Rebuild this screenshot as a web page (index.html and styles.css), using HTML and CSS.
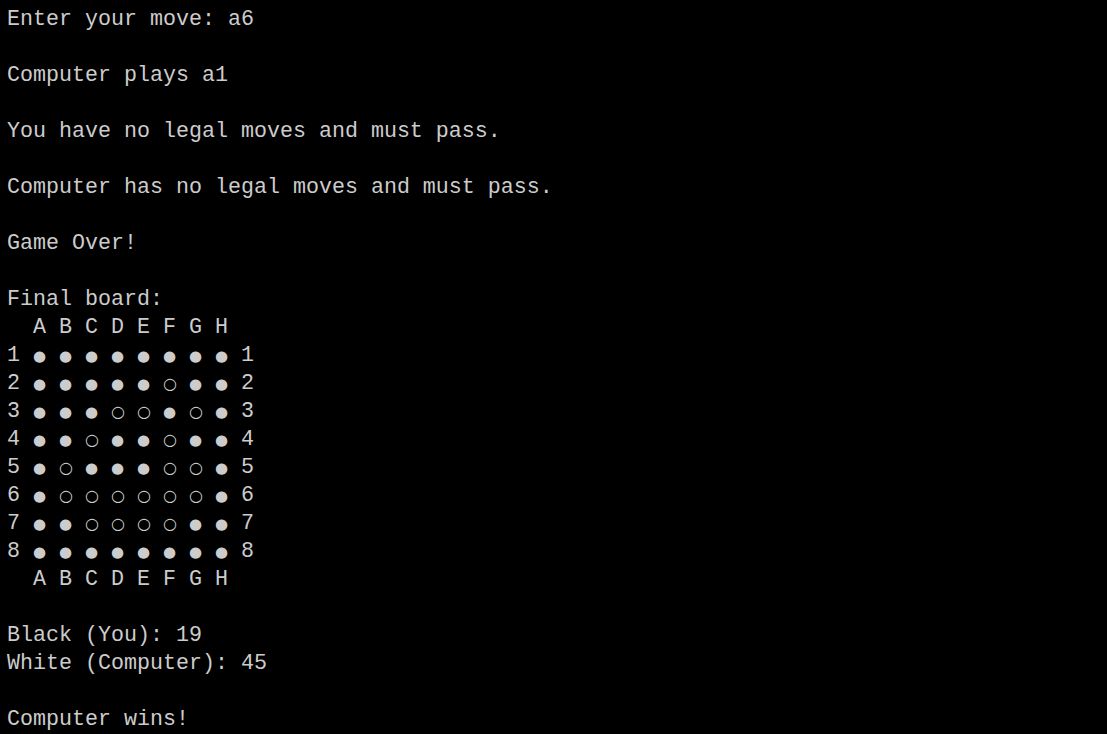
FILE: index.html
```html
<!DOCTYPE html>
<html>
<head>
<meta charset="utf-8">
<link rel="stylesheet" href="styles.css">
</head>
<body>
<div class="term">
<div class="line">Enter your move: a6</div>
<div class="line"></div>
<div class="line">Computer plays a1</div>
<div class="line"></div>
<div class="line">You have no legal moves and must pass.</div>
<div class="line"></div>
<div class="line">Computer has no legal moves and must pass.</div>
<div class="line"></div>
<div class="line">Game Over!</div>
<div class="line"></div>
<div class="line">Final board:</div>
<div class="line">  A B C D E F G H</div>
<div class="row"><span>1</span><span class="d">●</span><span class="d">●</span><span class="d">●</span><span class="d">●</span><span class="d">●</span><span class="d">●</span><span class="d">●</span><span class="d">●</span><span>1</span></div>
<div class="row"><span>2</span><span class="d">●</span><span class="d">●</span><span class="d">●</span><span class="d">●</span><span class="d">●</span><span class="o">○</span><span class="d">●</span><span class="d">●</span><span>2</span></div>
<div class="row"><span>3</span><span class="d">●</span><span class="d">●</span><span class="d">●</span><span class="o">○</span><span class="o">○</span><span class="d">●</span><span class="o">○</span><span class="d">●</span><span>3</span></div>
<div class="row"><span>4</span><span class="d">●</span><span class="d">●</span><span class="o">○</span><span class="d">●</span><span class="d">●</span><span class="o">○</span><span class="d">●</span><span class="d">●</span><span>4</span></div>
<div class="row"><span>5</span><span class="d">●</span><span class="o">○</span><span class="d">●</span><span class="d">●</span><span class="d">●</span><span class="o">○</span><span class="o">○</span><span class="d">●</span><span>5</span></div>
<div class="row"><span>6</span><span class="d">●</span><span class="o">○</span><span class="o">○</span><span class="o">○</span><span class="o">○</span><span class="o">○</span><span class="o">○</span><span class="d">●</span><span>6</span></div>
<div class="row"><span>7</span><span class="d">●</span><span class="d">●</span><span class="o">○</span><span class="o">○</span><span class="o">○</span><span class="o">○</span><span class="d">●</span><span class="d">●</span><span>7</span></div>
<div class="row"><span>8</span><span class="d">●</span><span class="d">●</span><span class="d">●</span><span class="d">●</span><span class="d">●</span><span class="d">●</span><span class="d">●</span><span class="d">●</span><span>8</span></div>
<div class="line">  A B C D E F G H</div>
<div class="line"></div>
<div class="line">Black (You): 19</div>
<div class="line">White (Computer): 45</div>
<div class="line"></div>
<div class="line">Computer wins!</div>
</div>
</body>
</html>
```
FILE: styles.css
```css
html, body {
  margin: 0;
  background: #000000;
  height: 100%;
  overflow: hidden;
}
.term {
  padding: 6px 7px;
  color: #cccccc;
  font-family: "Liberation Mono", "DejaVu Sans Mono", monospace;
  font-size: 21.67px;
  line-height: 28px;
}
.line {
  height: 28px;
  white-space: pre;
}
.row {
  display: flex;
  gap: 13px;
  height: 28px;
}
.row > span {
  width: 13px;
  text-align: center;
}
.d, .o {
  font-family: "DejaVu Sans", sans-serif;
  font-size: 15px;
  line-height: 28px;
}
.o {
  font-size: 16px;
  font-weight: bold;
}
```
